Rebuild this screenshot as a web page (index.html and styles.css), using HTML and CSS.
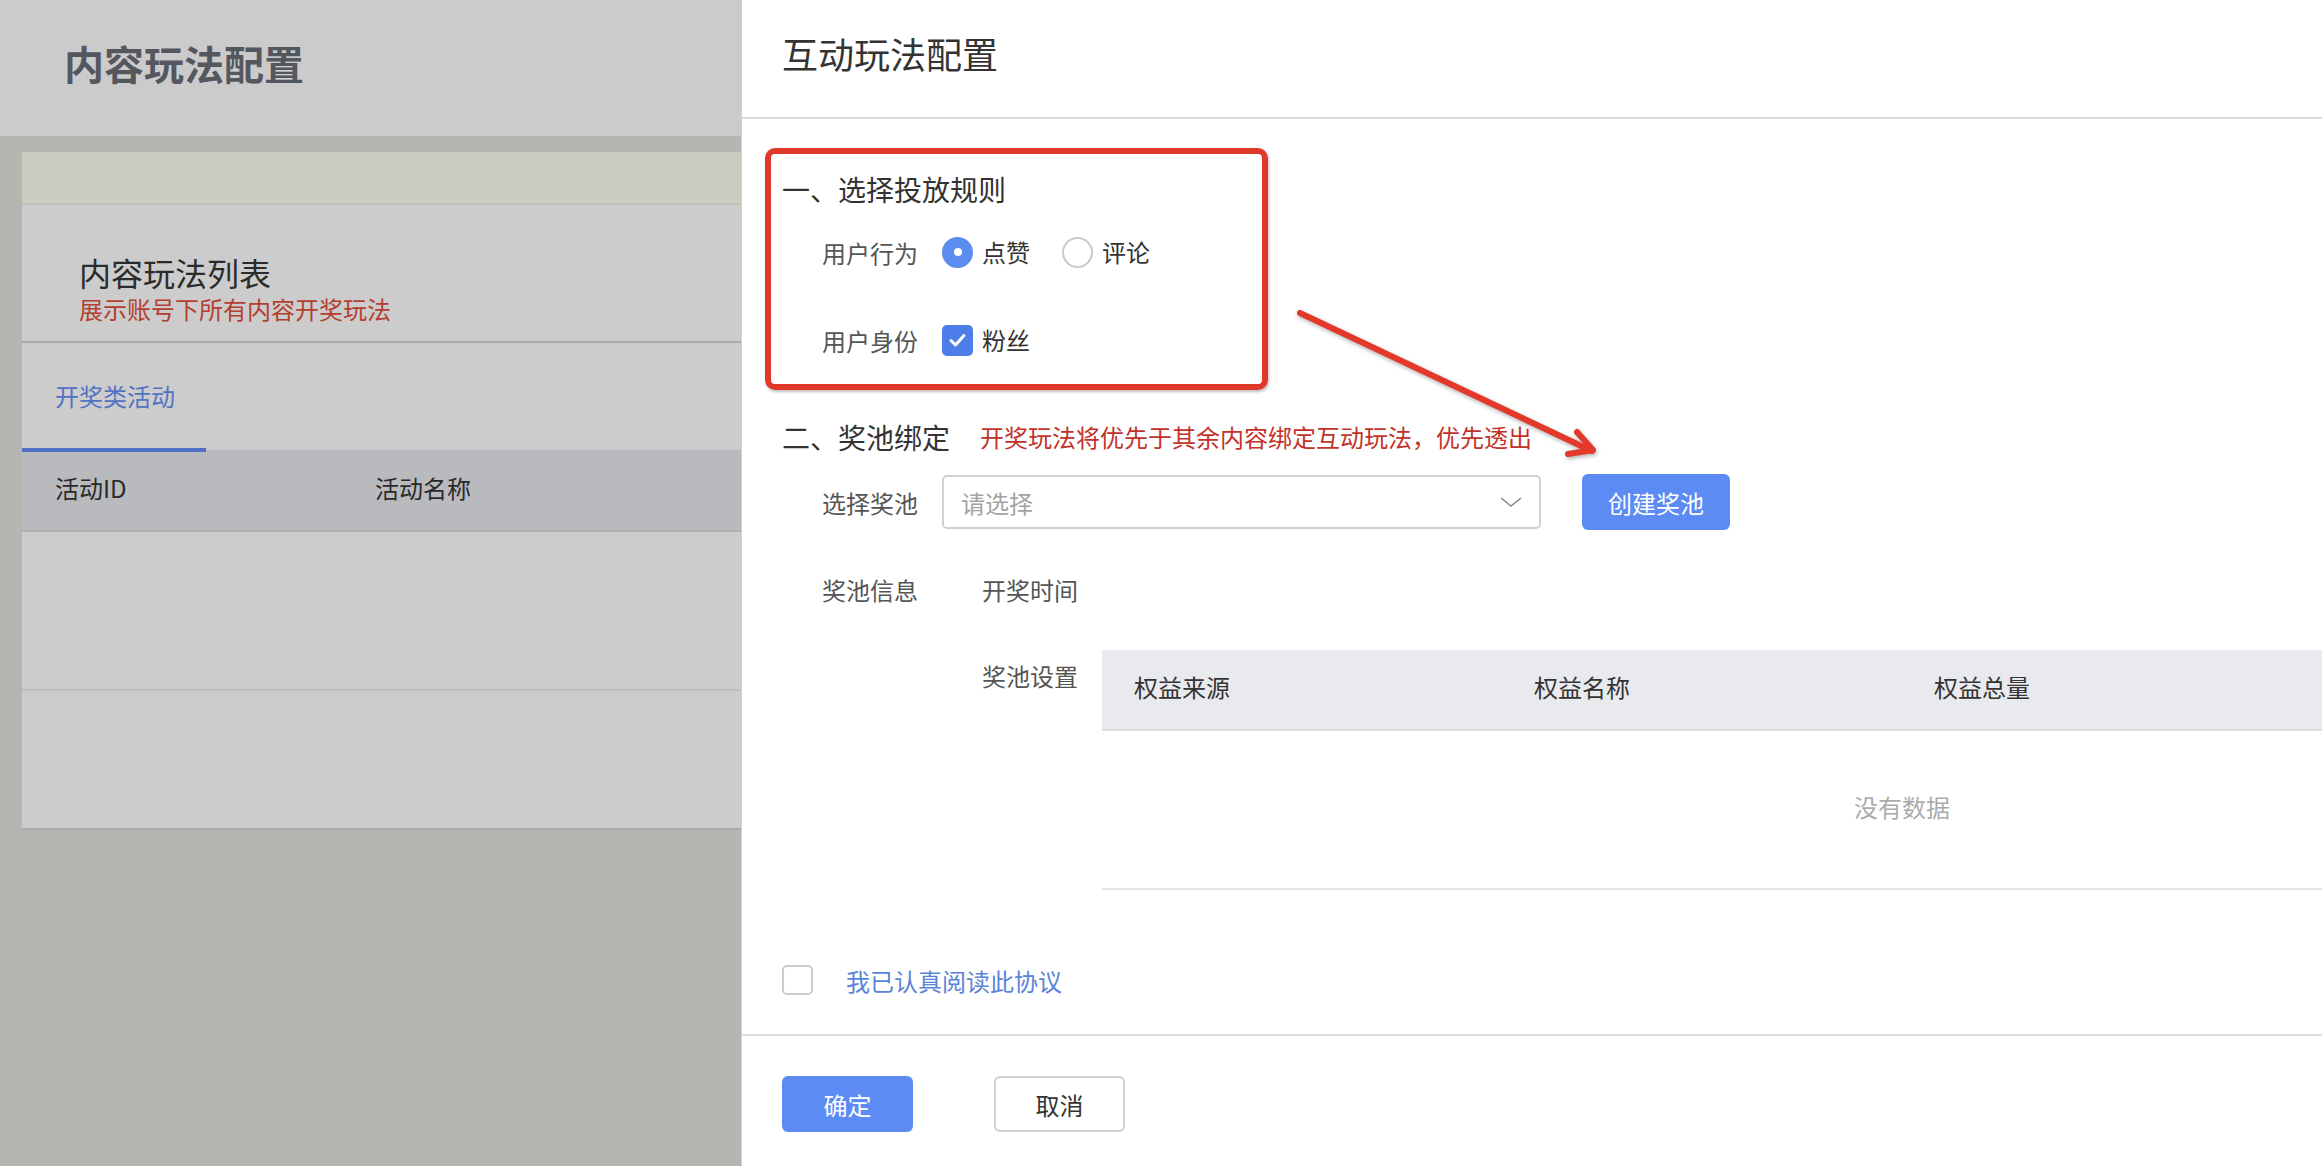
FILE: index.html
```html
<!DOCTYPE html>
<html lang="zh-CN">
<head>
<meta charset="utf-8">
<title>互动玩法配置</title>
<link rel="stylesheet" href="styles.css">
</head>
<body>
<div class="page">
  <header class="page-header"><h1>内容玩法配置</h1></header>
  <main class="page-main">
    <section class="card">
      <div class="card-notice"></div>
      <div class="card-head">
        <h2>内容玩法列表</h2>
        <p>展示账号下所有内容开奖玩法</p>
      </div>
      <div class="tabs"><div class="tab active">开奖类活动</div></div>
      <div class="list-table">
        <div class="lt-head"><div class="lt-cell">活动ID</div><div class="lt-cell">活动名称</div></div>
        <div class="lt-row"></div>
        <div class="lt-row last"></div>
      </div>
    </section>
  </main>
</div>

<aside class="drawer">
  <div class="drawer-header"><h3>互动玩法配置</h3></div>
  <div class="drawer-body">
    <div class="sec-title">一、选择投放规则</div>
    <div class="form-item r1">
      <label class="fi-label">用户行为</label>
      <div class="fi-control">
        <span class="radio checked"></span><span class="opt">点赞</span>
        <span class="radio"></span><span class="opt">评论</span>
      </div>
    </div>
    <div class="form-item r2">
      <label class="fi-label">用户身份</label>
      <div class="fi-control">
        <span class="checkbox checked"><svg viewBox="0 0 31 30" width="31" height="30"><polyline points="9,15.5 13.5,20 22,10.5" fill="none" stroke="#fff" stroke-width="3" stroke-linecap="round" stroke-linejoin="round"/></svg></span><span class="opt">粉丝</span>
      </div>
    </div>
    <div class="sec-title sec2"><span>二、奖池绑定</span><span class="note">开奖玩法将优先于其余内容绑定互动玩法，优先透出</span></div>
    <div class="form-item select-row">
      <label class="fi-label">选择奖池</label>
      <div class="fi-control">
        <div class="select"><span class="placeholder">请选择</span><svg class="chev" viewBox="0 0 22 10" width="22" height="10"><polyline points="1,1 11,9 21,1" fill="none" stroke="#8a8a8a" stroke-width="1.6"/></svg></div>
        <button class="btn primary create">创建奖池</button>
      </div>
    </div>
    <div class="pool-info">
      <label class="fi-label lh40">奖池信息</label>
      <div class="nested">
        <div class="nested-row"><label class="fi-label lh40">开奖时间</label></div>
        <div class="nested-row settings">
          <label class="fi-label lh52">奖池设置</label>
          <div class="pool-table">
            <div class="pt-head"><div class="pt-cell">权益来源</div><div class="pt-cell">权益名称</div><div class="pt-cell">权益总量</div></div>
            <div class="pt-empty">没有数据</div>
          </div>
        </div>
      </div>
    </div>
    <div class="agree"><span class="checkbox"></span><span class="agree-text">我已认真阅读此协议</span></div>
  </div>
  <div class="drawer-footer">
    <button class="btn primary">确定</button>
    <button class="btn default">取消</button>
  </div>
</aside>

<div class="annot-box"></div>
<svg class="annot-arrow" viewBox="0 0 340 180" width="340" height="180">
  <g fill="none" stroke="#e3392a" stroke-width="6" stroke-linecap="round" stroke-linejoin="round">
    <line x1="20" y1="23" x2="312" y2="161"/>
    <polyline points="297,142 313,160 288,164"/>
  </g>
</svg>
</body>
</html>
```

FILE: styles.css
```css
* { box-sizing: border-box; }
html, body {
  margin: 0;
  padding: 0;
  width: 2322px;
  height: 1166px;
  overflow: hidden;
}
body {
  position: relative;
  background: #b5b6b1;
  font-family: "Noto Sans CJK SC", "Noto Sans", sans-serif;
  color: #333;
}
h1, h2, h3, p { margin: 0; font-weight: 400; }

/* ---------- background page (dimmed) ---------- */
.page { display: flex; flex-direction: column; height: 1166px; }
.page-header {
  height: 136px;
  background: #cbcbcb;
  padding: 39px 0 0 64px;
}
.page-header h1 {
  font-size: 40px;
  line-height: 48px;
  font-weight: 700;
  color: #55575f;
}
.page-main { padding: 16px 0 0 22px; }
.card {
  background: #cccccc;
  box-shadow: 0 2px 0 #a9a9a9;
}
.card-notice {
  height: 53px;
  background: #cbccc1;
  border-bottom: 2px solid #c2c3b5;
}
.card-head {
  padding: 47px 0 16px 57px;
  border-bottom: 2px solid #a9aab0;
}
.card-head h2 { font-size: 32px; line-height: 41px; color: #2b2b2b; }
.card-head p { font-size: 24px; line-height: 32px; color: #b43e2f; }
.tabs {
  display: flex;
  height: 109px;
  border-bottom: 2px solid #b9babe;
}
.tab {
  width: 184px;
  height: 109px;
  padding-left: 33px;
  display: flex;
  align-items: center;
  font-size: 24px;
  color: #5272c4;
  border-bottom: 4px solid #4e6fc6;
}
.lt-head {
  display: flex;
  height: 80px;
  line-height: 72px;
  background: #b9babe;
  border-bottom: 2px solid #b0b1b4;
  font-size: 24px;
  color: #2a2a2a;
}
.lt-cell { width: 320px; padding-left: 33px; }
.lt-row { height: 159px; border-bottom: 2px solid #bdbdbd; }
.lt-row.last { height: 137px; border-bottom: 0; }

/* ---------- drawer ---------- */
.drawer {
  position: absolute;
  top: 0;
  left: 742px;
  right: 0;
  bottom: 0;
  background: #fff;
  overflow: hidden;
  box-shadow: -1px 0 0 #d2d2d2;
  display: flex;
  flex-direction: column;
}
.drawer-header {
  flex: none;
  height: 119px;
  padding: 35px 0 0 40px;
  border-bottom: 2px solid #dadada;
}
.drawer-header h3 { font-size: 36px; line-height: 36px; color: #333; }
.drawer-body {
  padding: 50px 40px 34px 40px;
  border-bottom: 2px solid #dedede;
}
.sec-title {
  display: flex;
  align-items: center;
  font-size: 28px;
  line-height: 40px;
  color: #333;
}
.sec2 { margin-top: 53px; }
.note { margin-left: 30px; font-size: 24px; color: #c2322a; }

.form-item { display: flex; align-items: center; height: 48px; }
.r1 { margin-top: 19px; }
.r2 { margin-top: 40px; }
.select-row { margin-top: 17px; height: 56px; }
.fi-label {
  flex: none;
  width: 160px;
  padding-left: 40px;
  font-size: 24px;
  color: #555;
}
.lh40 { line-height: 40px; }
.lh52 { line-height: 52px; }
.fi-control { display: flex; align-items: center; }

.radio {
  width: 31px;
  height: 31px;
  border-radius: 50%;
  border: 2px solid #cbcbcb;
  background: #fff;
  display: flex;
  align-items: center;
  justify-content: center;
}
.radio.checked { background: #5b8cf0; border-color: #5b8cf0; }
.radio.checked::after {
  content: "";
  width: 8px;
  height: 8px;
  border-radius: 50%;
  background: #fff;
}
.opt { margin-left: 9px; margin-right: 32px; font-size: 24px; line-height: 32px; color: #333; }

.checkbox {
  flex: none;
  width: 31px;
  height: 31px;
  border-radius: 5px;
  border: 2px solid #cdcdcd;
  background: #fff;
  display: flex;
}
.checkbox.checked { background: #4c7de9; border: 0; }

.select {
  width: 599px;
  height: 54px;
  border: 2px solid #d0d0d0;
  border-radius: 5px;
  display: flex;
  align-items: center;
  justify-content: space-between;
  padding: 0 17px 0 17px;
}
.placeholder { font-size: 24px; color: #a3a3a3; }
.chev { display: block; }

.btn {
  width: 131px;
  height: 56px;
  border-radius: 6px;
  font-family: inherit;
  font-size: 24px;
  padding: 0;
  cursor: pointer;
}
.btn.primary { background: #5b8bf3; border: 0; color: #fff; }
.btn.default { background: #fff; border: 2px solid #cfcfcf; color: #333; }
.btn.create { width: 148px; margin-left: 41px; }

.pool-info { display: flex; margin-top: 40px; }
.nested { display: flex; flex-direction: column; }
.nested-row { display: flex; height: 40px; }
.nested-row.settings { height: auto; margin-top: 40px; }
.pool-table { flex: none; width: 1600px; border-bottom: 2px solid #e3e3e3; }
.pt-head {
  display: flex;
  height: 81px;
  line-height: 74px;
  background: #e9eaee;
  border-bottom: 2px solid #dedede;
  font-size: 24px;
  color: #333;
}
.pt-cell { width: 400px; padding-left: 32px; }
.pt-empty {
  height: 157px;
  line-height: 152px;
  text-align: center;
  font-size: 24px;
  color: #ababab;
}

.agree { display: flex; align-items: center; height: 40px; margin-top: 70px; }
.agree .checkbox { height: 30px; }
.agree-text { margin-left: 33px; font-size: 24px; color: #5a84d8; }

.drawer-footer { padding: 40px 40px 0 40px; display: flex; gap: 81px; }

/* ---------- annotations ---------- */
.annot-box {
  position: absolute;
  left: 765px;
  top: 148px;
  width: 503px;
  height: 242px;
  border: 6px solid #e0392a;
  border-radius: 10px;
  box-shadow: 1px 2px 3px rgba(0,0,0,0.25);
}
.annot-arrow {
  position: absolute;
  left: 1280px;
  top: 290px;
  filter: drop-shadow(1px 2px 2px rgba(0,0,0,0.3));
}
```
